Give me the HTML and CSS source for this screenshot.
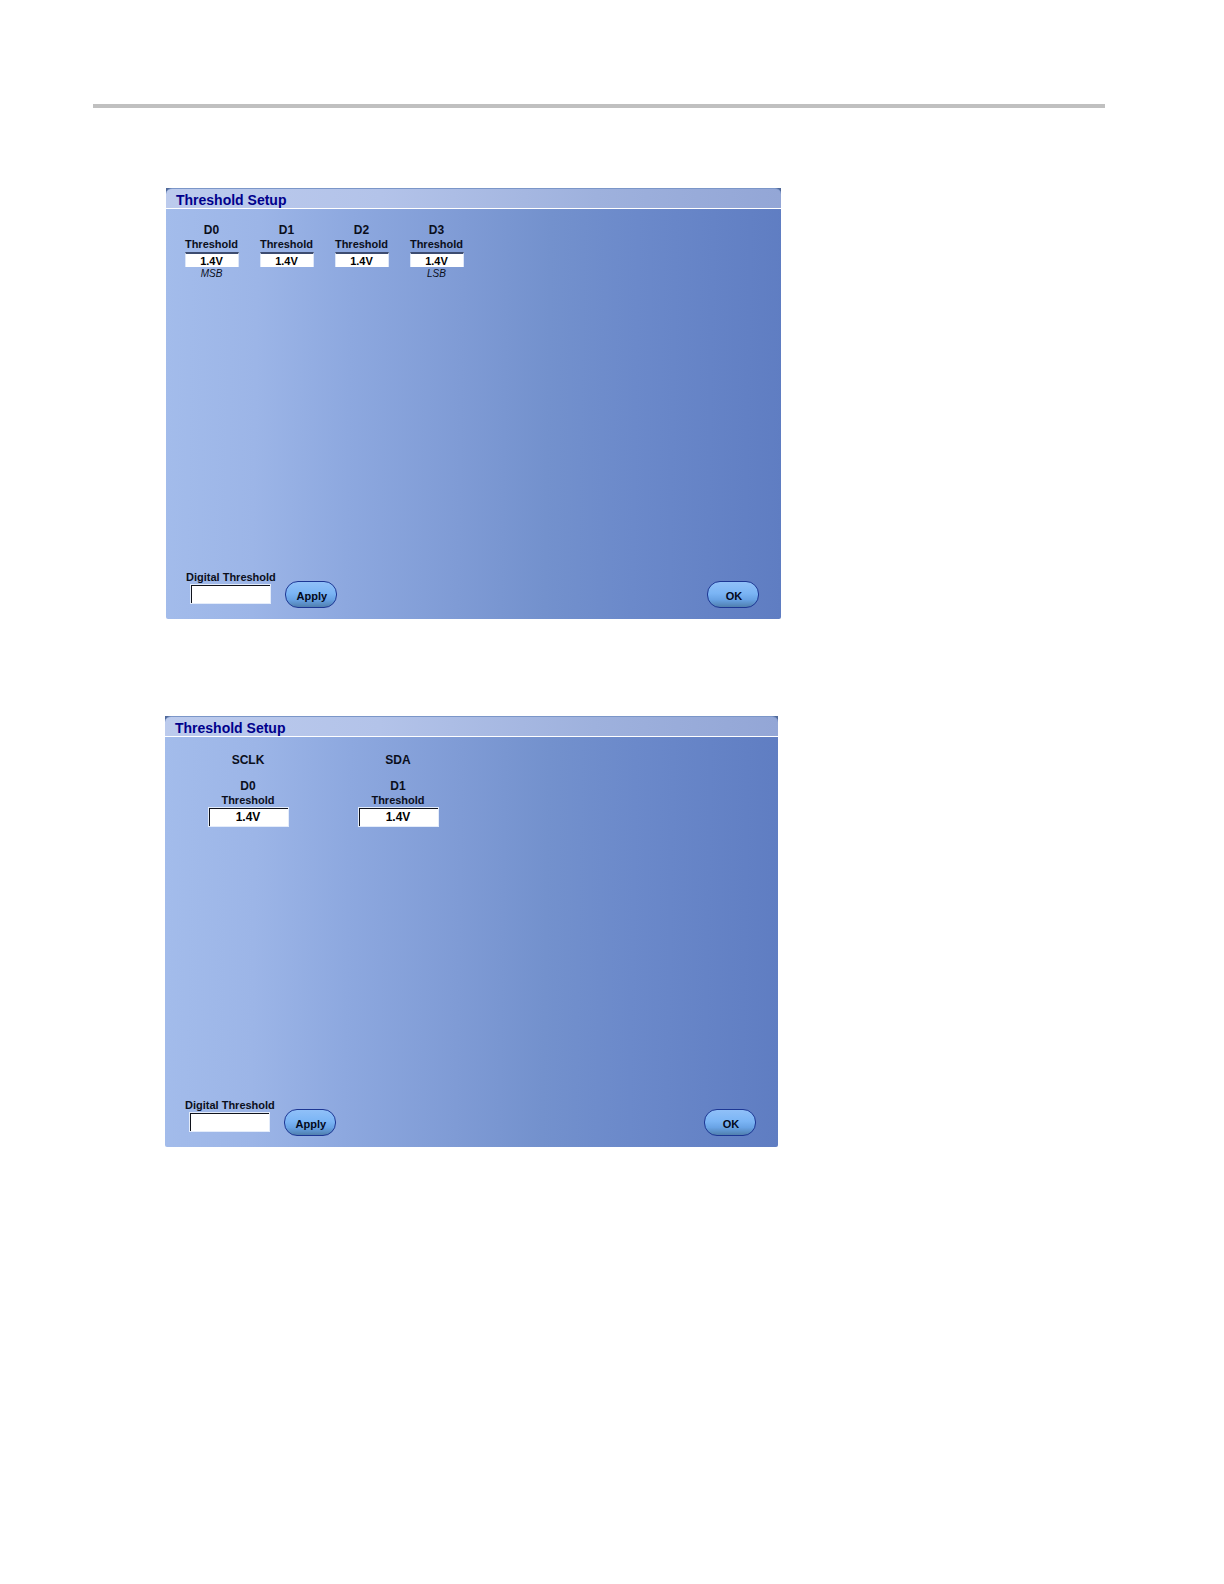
FILE: index.html
```html
<!DOCTYPE html>
<html lang="en">
<head>
<meta charset="utf-8">
<meta name="viewport" content="width=device-width, initial-scale=1">
<title>Threshold Setup</title>
<link rel="stylesheet" href="styles.css">
</head>
<body>
<hr class="rule">
<main class="figures">
  <section class="panel" aria-labelledby="bus-title">
    <h2 class="panel-title" id="bus-title">Threshold Setup</h2>
    <div class="channels channels-bus">
      <div class="channel">
        <label class="channel-label" for="bus-d0"><span class="channel-name">D0</span>Threshold</label>
        <input class="value" id="bus-d0" type="text" value="1.4V">
        <em class="bit">MSB</em>
      </div>
      <div class="channel">
        <label class="channel-label" for="bus-d1"><span class="channel-name">D1</span>Threshold</label>
        <input class="value" id="bus-d1" type="text" value="1.4V">
      </div>
      <div class="channel">
        <label class="channel-label" for="bus-d2"><span class="channel-name">D2</span>Threshold</label>
        <input class="value" id="bus-d2" type="text" value="1.4V">
      </div>
      <div class="channel">
        <label class="channel-label" for="bus-d3"><span class="channel-name">D3</span>Threshold</label>
        <input class="value" id="bus-d3" type="text" value="1.4V">
        <em class="bit">LSB</em>
      </div>
    </div>
    <div class="actions">
      <div class="digital">
        <label for="bus-digital">Digital Threshold</label>
        <input class="value value-large" id="bus-digital" type="text">
      </div>
      <button class="pill" type="button">Apply</button>
      <button class="pill pill-ok" type="button">OK</button>
    </div>
  </section>

  <section class="panel panel-serial" aria-labelledby="serial-title">
    <h2 class="panel-title" id="serial-title">Threshold Setup</h2>
    <div class="channels channels-serial">
      <div class="channel">
        <h3 class="signal">SCLK</h3>
        <label class="channel-label" for="serial-d0"><span class="channel-name">D0</span>Threshold</label>
        <input class="value value-large" id="serial-d0" type="text" value="1.4V">
      </div>
      <div class="channel">
        <h3 class="signal">SDA</h3>
        <label class="channel-label" for="serial-d1"><span class="channel-name">D1</span>Threshold</label>
        <input class="value value-large" id="serial-d1" type="text" value="1.4V">
      </div>
    </div>
    <div class="actions">
      <div class="digital">
        <label for="serial-digital">Digital Threshold</label>
        <input class="value value-large" id="serial-digital" type="text">
      </div>
      <button class="pill" type="button">Apply</button>
      <button class="pill pill-ok" type="button">OK</button>
    </div>
  </section>
</main>
</body>
</html>
```
FILE: styles.css
```css
* {
  box-sizing: border-box;
}

body {
  margin: 0;
  padding: 104px 119px 120px 93px;
  background: #fff;
  color: #0b0f1c;
  font: bold 11px/14px "Liberation Sans", Arial, sans-serif;
}

.rule {
  height: 4px;
  margin: 0;
  border: 0;
  background: #c0c0c0;
}

.figures {
  display: flex;
  flex-direction: column;
  gap: 97px;
  padding: 80px 0 0 72px;
}

/* The dark strip along the top shows only behind the title bar's round corners. */
.panel {
  display: flex;
  flex-direction: column;
  width: 100%;
  max-width: 615px;
  min-height: 431px;
  margin-left: 1px;
  border-radius: 0 0 2px 2px;
  background:
    linear-gradient(#50699a, #50699a) 0 0 / 100% 6px no-repeat,
    linear-gradient(91deg, #a3bceb 0%, #9cb5e7 15%, #8da8df 30%, #7f9bd5 48%, #7391cd 62%, #6b89ca 76%, #5f7dc2 100%);
}

.panel-serial {
  max-width: 613px;
  margin-left: 0;
}

.panel-title {
  margin: 0;
  padding: 3px 10px 0;
  border-top: 1px solid #7b96c8;
  border-bottom: 1px solid #fff;
  border-radius: 6px 6px 0 0;
  background: linear-gradient(90deg, #bccbed 0%, #b3c3e9 35%, #9eb1dd 70%, #93a6d6 100%);
  color: #00008b;
  font-size: 14px;
  line-height: 16px;
}

.channels {
  display: flex;
  padding-left: 8px;
}

.channels-bus {
  padding-top: 14px;
}

.channels-serial {
  padding-top: 16px;
}

.channel {
  display: flex;
  flex-direction: column;
  align-items: center;
  width: 75px;
}

.channels-serial .channel {
  width: 150px;
}

.signal {
  margin: 0 0 12px;
  font-size: 12px;
}

.channel-label {
  text-align: center;
}

.channel-name {
  display: block;
  font-size: 12px;
}

.value {
  width: 54px;
  height: 15px;
  margin: 1px 0 0;
  padding: 1px 0 0;
  border: 1px solid #dce6f8;
  border-top: 2px solid #3d4c70;
  border-bottom: 0;
  border-radius: 0;
  background: #fff;
  color: #000;
  font: inherit;
  text-align: center;
}

.value-large {
  width: 81px;
  height: 20px;
  margin: 0;
  padding: 0;
  border: 1px solid #e4ecfa;
  box-shadow: inset 1px 1px #10131c;
  font-size: 12px;
}

.bit {
  font-size: 10px;
  font-weight: normal;
}

.actions {
  display: flex;
  align-items: flex-end;
  gap: 9px;
  margin-top: auto;
  padding: 0 22px 11px 20px;
}

.digital {
  display: flex;
  flex-direction: column;
  align-items: center;
  padding-bottom: 4px;
}

.pill {
  width: 52px;
  height: 27px;
  padding: 2px 0 0 2px;
  border: 1px solid #1d3794;
  border-radius: 13px;
  background: linear-gradient(#90c0f8 0%, #7bb5f5 45%, #69a3e5 70%, #507fae 100%);
  color: #03081a;
  font: inherit;
  text-align: center;
}

.pill-ok {
  margin-left: auto;
}
```
